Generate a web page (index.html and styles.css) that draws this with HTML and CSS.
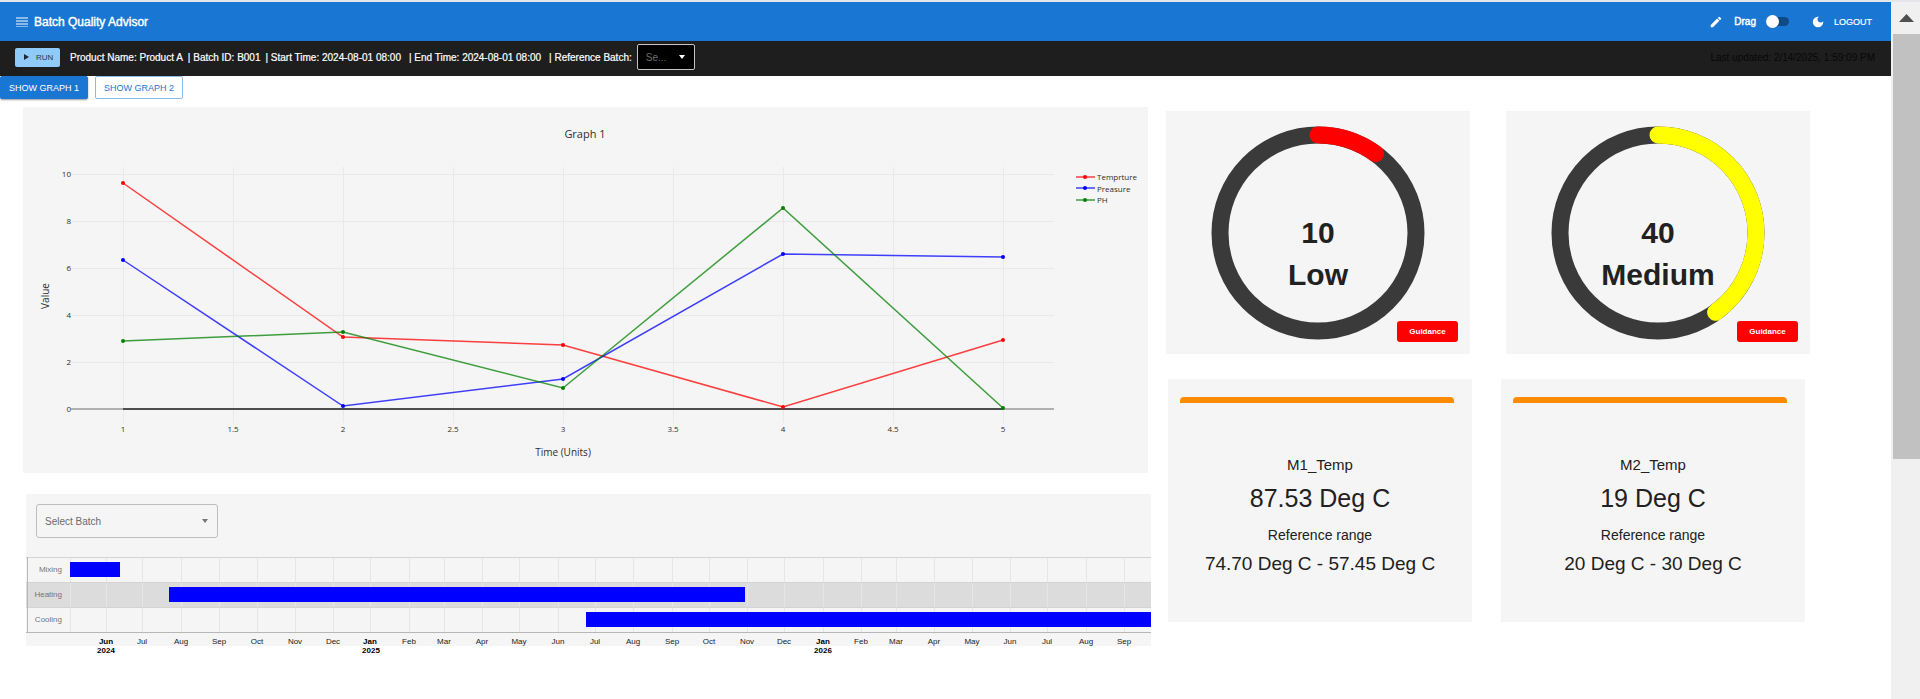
FILE: index.html
```html
<!DOCTYPE html>
<html lang="en">
<head>
<meta charset="utf-8">
<title>Batch Quality Advisor</title>
<link rel="stylesheet" href="styles.css">
</head>
<body>
<div class="window">
<div class="page">
  <header class="appbar">
    <button class="icon-btn" aria-label="Menu"><svg width="12" height="10" viewBox="0 0 12 10"><path d="M0 1h12M0 4h12M0 7h12M0 10h12" stroke="#fff" stroke-width="1"/></svg></button>
    <h1 class="brand">Batch Quality Advisor</h1>
    <div class="actions">
      <button class="icon-btn" aria-label="Edit"><svg width="14" height="14" viewBox="0 0 24 24"><path fill="#fff" d="M3 17.25V21h3.75L17.81 9.94l-3.75-3.75zM20.71 7.04a1 1 0 0 0 0-1.41l-2.34-2.34a1 1 0 0 0-1.41 0l-1.83 1.83 3.75 3.75z"/></svg></button>
      <label class="drag" for="drag">Drag</label>
      <input class="switch" type="checkbox" id="drag">
      <button class="icon-btn moon" aria-label="Dark mode"><svg width="14" height="14" viewBox="0 0 24 24"><path fill="#fff" d="M12 3a9 9 0 1 0 9 9c0-.46-.04-.92-.1-1.36a5.389 5.389 0 0 1-4.4 2.26 5.403 5.403 0 0 1-3.14-9.8c-.44-.06-.9-.1-1.36-.1"/></svg></button>
      <button class="logout">LOGOUT</button>
    </div>
  </header>
  <div class="infobar">
    <button class="run"><svg width="5" height="6" viewBox="0 0 5 6"><path d="M0 0l5 3-5 3z" fill="#1b2733"/></svg>RUN</button>
    <div class="facts">
      <span>Product Name: Product A</span>
      <span>| Batch ID: B001</span>
      <span>| Start Time: 2024-08-01 08:00</span>
      <span class="wide">| End Time: 2024-08-01 08:00</span>
      <label class="wide" for="ref">| Reference Batch:</label>
    </div>
    <div class="ref-field">
      <select id="ref"><option>Se...</option></select>
      <svg class="caret" width="6" height="4" viewBox="0 0 6 4"><path d="M0 0h6L3 4z" fill="#fff"/></svg>
    </div>
    <span class="updated">Last updated: 2/14/2025, 1:59:09 PM</span>
  </div>
  <div class="tabs">
    <button class="tab active">SHOW GRAPH 1</button>
    <button class="tab">SHOW GRAPH 2</button>
  </div>
  <main class="board">
    <div class="left">
      <section class="card graph">
        <svg viewBox="0 0 1125 366" class="plot" role="img" aria-label="Graph 1">
          <g class="grid">
            <path d="M49 67H1031M49 114H1031M49 161H1031M49 208H1031M49 255H1031"/>
            <path d="M100 60V316M210 60V316M320 60V316M430 60V316M540 60V316M650 60V316M760 60V316M870 60V316M980 60V316"/>
          </g>
          <path d="M48 302H1031" stroke="#b0b0b0" stroke-width="2"/>
          <path d="M100 302H980" stroke="#4d4d4d" stroke-width="2"/>
          <g class="series red"><polyline points="100,76 320,230 540,238 760,300 980,233"/><circle cx="100" cy="76" r="2"/><circle cx="320" cy="230" r="2"/><circle cx="540" cy="238" r="2"/><circle cx="760" cy="300" r="2"/><circle cx="980" cy="233" r="2"/><path d="M1053 70h19"/><circle cx="1062" cy="70" r="2"/></g>
          <g class="series blue"><polyline points="100,153 320,299 540,272 760,147 980,150"/><circle cx="100" cy="153" r="2"/><circle cx="320" cy="299" r="2"/><circle cx="540" cy="272" r="2"/><circle cx="760" cy="147" r="2"/><circle cx="980" cy="150" r="2"/><path d="M1053 81h19"/><circle cx="1062" cy="81" r="2"/></g>
          <g class="series green"><polyline points="100,234 320,225 540,281 760,101 980,301"/><circle cx="100" cy="234" r="2"/><circle cx="320" cy="225" r="2"/><circle cx="540" cy="281" r="2"/><circle cx="760" cy="101" r="2"/><circle cx="980" cy="301" r="2"/><path d="M1053 93h19"/><circle cx="1062" cy="93" r="2"/></g>
          <g class="tick">
            <text x="1074" y="73">Temprture</text><text x="1074" y="85">Preasure</text><text x="1074" y="96">PH</text>
          </g>
          <g class="tick end">
            <text x="48" y="70">10</text><text x="48" y="117">8</text><text x="48" y="164">6</text><text x="48" y="211">4</text><text x="48" y="258">2</text><text x="48" y="305">0</text>
          </g>
          <g class="tick mid">
            <text x="100" y="325">1</text><text x="210" y="325">1.5</text><text x="320" y="325">2</text><text x="430" y="325">2.5</text><text x="540" y="325">3</text><text x="650" y="325">3.5</text><text x="760" y="325">4</text><text x="870" y="325">4.5</text><text x="980" y="325">5</text>
          </g>
          <text class="plot-title" x="562" y="31">Graph 1</text>
          <text class="axis-title" x="540" y="349">Time (Units)</text>
          <text class="axis-title" transform="translate(26 189) rotate(-90)">Value</text>
        </svg>
      </section>
      <section class="card gantt">
        <div class="batch-field">
          <select aria-label="Select Batch"><option>Select Batch</option></select>
          <svg class="caret" width="6" height="4" viewBox="0 0 6 4"><path d="M0 0h6L3 4z" fill="#757575"/></svg>
        </div>
        <svg viewBox="0 0 1125 90" class="timeline" role="img" aria-label="Batch timeline">
          <rect x="0" y="26" width="1125" height="25" fill="#dcdcdc"/>
          <path class="months" d="M44 1V76M80 1V76M116 1V76M155 1V76M193 1V76M231 1V76M269 1V76M307 1V76M344 1V76M383 1V76M418 1V76M456 1V76M493 1V76M532 1V76M569 1V76M607 1V76M646 1V76M683 1V76M721 1V76M758 1V76M797 1V76M835 1V76M870 1V76M908 1V76M946 1V76M984 1V76M1021 1V76M1060 1V76M1098 1V76"/>
          <path class="rows" d="M0 1H1125M0 26H1125M0 51H1125"/>
          <path class="frame" d="M1 1V76M0 76H1125"/>
          <g fill="#0000ff"><rect x="44" y="6" width="50" height="15"/><rect x="143" y="31" width="576" height="15"/><rect x="560" y="56" width="565" height="15"/></g>
          <g class="row-label"><text x="36" y="16">Mixing</text><text x="36" y="41">Heating</text><text x="36" y="66">Cooling</text></g>
          <g class="month">
            <text class="year" x="80" y="88">Jun</text><text class="year" x="80" y="97">2024</text>
            <text x="116" y="88">Jul</text><text x="155" y="88">Aug</text><text x="193" y="88">Sep</text><text x="231" y="88">Oct</text><text x="269" y="88">Nov</text><text x="307" y="88">Dec</text>
            <text class="year" x="344" y="88">Jan</text><text class="year" x="345" y="97">2025</text>
            <text x="383" y="88">Feb</text><text x="418" y="88">Mar</text><text x="456" y="88">Apr</text><text x="493" y="88">May</text><text x="532" y="88">Jun</text><text x="569" y="88">Jul</text><text x="607" y="88">Aug</text><text x="646" y="88">Sep</text><text x="683" y="88">Oct</text><text x="721" y="88">Nov</text><text x="758" y="88">Dec</text>
            <text class="year" x="797" y="88">Jan</text><text class="year" x="797" y="97">2026</text>
            <text x="835" y="88">Feb</text><text x="870" y="88">Mar</text><text x="908" y="88">Apr</text><text x="946" y="88">May</text><text x="984" y="88">Jun</text><text x="1021" y="88">Jul</text><text x="1060" y="88">Aug</text><text x="1098" y="88">Sep</text>
          </g>
        </svg>
      </section>
    </div>
    <div class="right">
      <div class="gauges">
        <section class="card gauge">
          <svg width="214" height="214" viewBox="0 0 214 214">
            <circle class="ring" cx="107" cy="107" r="98"/>
            <circle class="arc low" cx="107" cy="107" r="98" pathLength="100" stroke-dasharray="10 100" transform="rotate(-90 107 107)"/>
          </svg>
          <div class="reading"><span>10</span><span>Low</span></div>
          <button class="guidance">Guidance</button>
        </section>
        <section class="card gauge">
          <svg width="214" height="214" viewBox="0 0 214 214">
            <circle class="ring" cx="107" cy="107" r="98"/>
            <circle class="arc medium" cx="107" cy="107" r="98" pathLength="100" stroke-dasharray="40 100" transform="rotate(-90 107 107)"/>
          </svg>
          <div class="reading"><span>40</span><span>Medium</span></div>
          <button class="guidance">Guidance</button>
        </section>
      </div>
      <div class="metrics">
        <section class="card metric">
          <div class="stripe"></div>
          <h2>M1_Temp</h2>
          <p class="value">87.53 Deg C</p>
          <p class="caption">Reference range</p>
          <p class="range">74.70 Deg C - 57.45 Deg C</p>
        </section>
        <section class="card metric">
          <div class="stripe"></div>
          <h2>M2_Temp</h2>
          <p class="value">19 Deg C</p>
          <p class="caption">Reference range</p>
          <p class="range">20 Deg C - 30 Deg C</p>
        </section>
      </div>
    </div>
  </main>
</div>
<div class="scrollbar" aria-hidden="true">
  <div class="scroll-up"><svg width="15" height="8" viewBox="0 0 15 8"><path d="M0 8L7.500 0 15 8z" fill="#505050"/></svg></div>
  <div class="thumb"></div>
</div>
</div>
</body>
</html>
```

FILE: styles.css
```css
* { box-sizing: border-box; }
body { margin: 0; background: #fff; color: #212121; font-family: "Liberation Sans", Arial, sans-serif; }
button, select { font-family: inherit; margin: 0; }
button { border: 0; cursor: pointer; }
h1, h2, p { margin: 0; font-weight: 400; }

.window { display: flex; min-height: 100vh; border-top: 2px solid #e4e6e9; }
.page { flex: 1; min-width: 0; }

.appbar { display: flex; align-items: center; height: 39px; padding: 0 19px 0 16px; background: #1976d2; color: #fff; -webkit-text-stroke: 0.4px #fff; }
.icon-btn { display: flex; padding: 0; background: none; }
.brand { margin-left: 6px; font-size: 12px; }
.actions { display: flex; align-items: center; margin-left: auto; }
.drag { margin-left: 11px; font-size: 10px; }
.switch { appearance: none; position: relative; width: 23px; height: 9px; margin: 0 0 0 10px; border-radius: 5px; background: #0f4a85; }
.switch::before { content: ""; position: absolute; left: 0; top: -2px; width: 13px; height: 13px; border-radius: 50%; background: #fff; }
.moon { margin-left: 22px; }
.logout { margin-left: 9px; padding: 0; background: none; color: #fff; font-size: 9px; -webkit-text-stroke: 0.2px #fff; }

.infobar { display: flex; align-items: center; height: 35px; padding: 0 16px 3px 15px; background: #1e1e1e; color: #fff; font-size: 10px; }
.run { display: flex; align-items: center; gap: 7px; width: 45px; height: 19px; padding: 0 0 0 9px; border-radius: 2px; background: #90caf9; color: #26394a; font-size: 8px; }
.facts { display: flex; gap: 5px; margin-left: 10px; -webkit-text-stroke: 0.2px #fff; }
.wide { padding-left: 3px; }
.ref-field, .batch-field { position: relative; }
.ref-field { margin-left: 5px; }
.ref-field select { appearance: none; display: block; width: 58px; height: 26px; padding: 0 8px; border: 1px solid #c4c4c4; border-radius: 2px; background: #000; color: #6d6d6d; font-size: 10px; }
.caret { position: absolute; right: 10px; top: 50%; margin-top: -2px; pointer-events: none; }
.updated { margin-left: auto; color: #080808; }

.tabs { display: flex; gap: 7px; }
.tab { height: 23px; padding: 0 8px; border: 1px solid #8cbbe9; border-radius: 2px; background: #fff; color: #1976d2; font-size: 9px; }
.tab.active { border-color: #1976d2; background: #1976d2; color: #fff; box-shadow: 0 1px 2px rgba(0, 0, 0, .4); }

.board { display: grid; grid-template-columns: 1128fr 644fr; column-gap: 15px; padding: 8px 81px 53px 23px; }
.card { background: #f5f5f5; }
.left { display: flex; flex-direction: column; gap: 21px; }
.graph { margin-right: 3px; }
.gantt { margin-left: 3px; padding-top: 10px; }
.plot, .timeline { display: block; width: 100%; height: auto; overflow: visible; }
.grid path { stroke: #e9e9e9; fill: none; shape-rendering: crispEdges; }
.series { stroke-width: 1.5; stroke-opacity: .75; }
.series polyline { fill: none; }
.series circle { stroke: none; }
.red { stroke: #f00; fill: #f00; }
.blue { stroke: #00f; fill: #00f; }
.green { stroke: #008000; fill: #008000; }
.tick, .plot-title, .axis-title { font-family: "Open Sans", sans-serif; fill: #2f2f2f; }
.tick { font-size: 8px; }
.end { text-anchor: end; }
.mid, .plot-title, .axis-title { text-anchor: middle; }
.plot-title { font-size: 11px; }
.axis-title { font-size: 10px; }

.batch-field { width: 182px; margin: 0 0 18px 10px; }
.batch-field select { display: block; appearance: none; width: 100%; height: 34px; padding: 0 8px; border: 1px solid #bdbdbd; border-radius: 3px; background: transparent; color: #6b6b6b; font-size: 10px; }
.months { stroke: #e6e6e6; shape-rendering: crispEdges; }
.rows { stroke: #d4d4d4; shape-rendering: crispEdges; }
.frame { stroke: #b7b7b7; shape-rendering: crispEdges; }
.row-label { font-size: 8px; fill: #757575; text-anchor: end; }
.month { font-size: 8px; text-anchor: middle; fill: #222; }
.year { font-weight: 700; fill: #000; }

.right { display: flex; flex-direction: column; gap: 25px; padding-top: 4px; }
.gauges, .metrics { display: flex; }
.gauges { gap: 36px; }
.metrics { gap: 29px; padding: 0 5px 0 2px; }
.gauge { position: relative; flex: 1; display: grid; place-items: center; height: 243px; }
.gauge > svg, .reading { grid-area: 1 / 1; }
.ring, .arc { fill: none; stroke-width: 17; }
.ring { stroke: #3a3a3a; }
.arc { stroke-linecap: round; }
.low { stroke: #f00; }
.medium { stroke: #ff0; }
.reading { display: flex; flex-direction: column; align-items: center; padding-top: 42px; font-size: 30px; font-weight: 700; line-height: 42px; }
.guidance { position: absolute; right: 12px; bottom: 12px; width: 61px; height: 21px; padding: 0; border-radius: 3px; background: #f00; color: #fff; font-size: 8px; font-weight: 700; }
.metric { flex: 1; height: 243px; padding-top: 18px; text-align: center; }
.stripe { height: 6px; margin: 0 18px 50px 12px; border-radius: 4px 4px 0 0; background: #ff8c00; }
.metric h2 { font-size: 15px; line-height: 24px; }
.value { font-size: 25px; line-height: 42px; }
.caption { font-size: 14px; line-height: 33px; }
.range { font-size: 19px; line-height: 24px; }

.scrollbar { width: 29px; padding-left: 2px; background: #f0f0f0; }
.scroll-up { display: flex; justify-content: center; align-items: center; height: 32px; }
.thumb { height: 61%; background: #c1c1c1; }
```
